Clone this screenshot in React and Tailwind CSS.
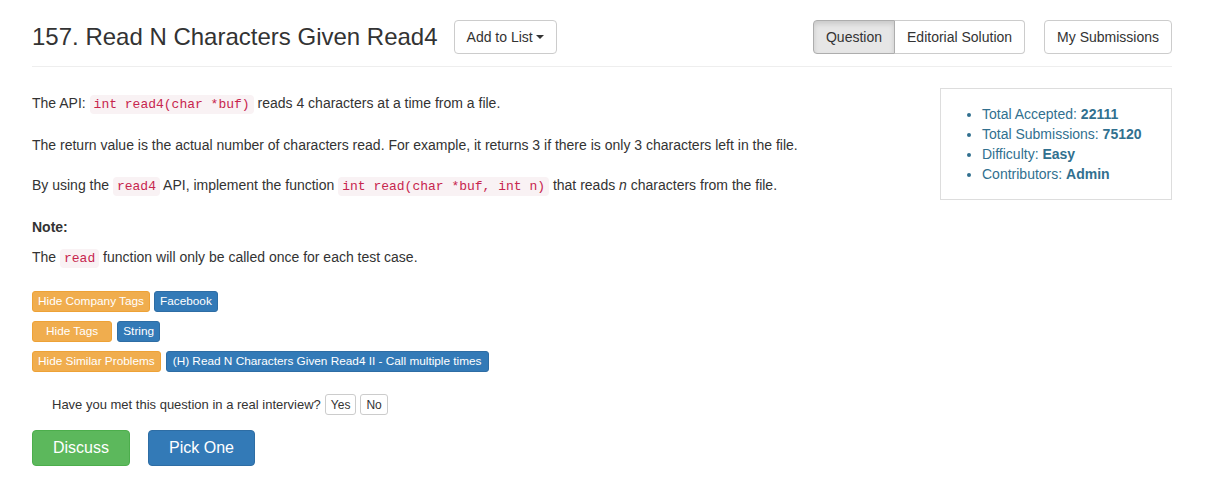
import React from "react";

const codeCls = "font-['Liberation_Mono',monospace] text-[13px] leading-[14px] text-[#c7254e] bg-[#f9f2f4] rounded px-1 py-[2px]";

function Code({ children }) {
  return <code className={codeCls}>{children}</code>;
}

function Xs({ children, color = "blue", className = "" }) {
  const c = color === "orange" ? "bg-[#f0ad4e] border-[#eea236]" : "bg-[#337ab7] border-[#2e6da4]";
  return (
    <span className={`inline-block text-white text-[11.8px] leading-[19px] border rounded-[3px] ${c} ${className}`}>{children}</span>
  );
}

export default function App() {
  return (
    <div className="min-h-screen bg-white text-[#333] text-[14px] leading-[20px] font-['Liberation_Sans',Arial,sans-serif]">
      <div className="ml-[32px] w-[1140px]">
        {/* header */}
        <div className="flex items-center justify-between pt-[20px] pb-[12px] border-b border-[#eee]">
          <div className="flex items-center">
            <h3 className="text-[24px] leading-[34px] font-normal">157. Read N Characters Given Read4</h3>
            <button className="ml-[16px] h-[34px] px-[12px] border border-[#ccc] rounded bg-white text-[14px] flex items-center">
              Add to List
              <span className="ml-[3px] inline-block w-0 h-0 border-x-[4px] border-x-transparent border-t-[4px] border-t-[#333]" />
            </button>
          </div>
          <div className="flex items-center">
            <div className="flex">
              <button className="h-[34px] px-[12px] border border-[#adadad] rounded-l bg-[#e6e6e6] shadow-[inset_0_3px_5px_rgba(0,0,0,0.125)]">Question</button>
              <button className="h-[34px] px-[12px] border border-l-0 border-[#ccc] rounded-r bg-white">Editorial Solution</button>
            </div>
            <button className="ml-[19px] h-[34px] px-[12px] border border-[#ccc] rounded bg-white">My Submissions</button>
          </div>
        </div>

        <div className="flex justify-between">
          <div className="pt-[26px]">
            <p className="mb-[22px]">The API: <Code>int read4(char *buf)</Code> reads 4 characters at a time from a file.</p>
            <p className="mb-[20px]">The return value is the actual number of characters read. For example, it returns 3 if there is only 3 characters left in the file.</p>
            <p className="mb-[22px]">By using the <Code>read4</Code> API, implement the function <Code>int read(char *buf, int n)</Code> that reads <i>n</i> characters from the file.</p>
            <p className="mb-[10px] font-bold">Note:</p>
            <p>The <Code>read</Code> function will only be called once for each test case.</p>

            <div className="mt-[24px] flex flex-col gap-[9px]">
              <div className="flex gap-[4px]">
                <Xs color="orange" className="px-[5px]">Hide Company Tags</Xs>
                <Xs className="px-[5px]">Facebook</Xs>
              </div>
              <div className="flex gap-[5px]">
                <Xs color="orange" className="px-[13px]">Hide Tags</Xs>
                <Xs className="px-[5px]">String</Xs>
              </div>
              <div className="flex gap-[5px]">
                <Xs color="orange" className="px-[5px]">Hide Similar Problems</Xs>
                <Xs className="px-[6px]">(H) Read N Characters Given Read4 II - Call multiple times</Xs>
              </div>
            </div>

            <div className="mt-[22px] pl-[20px] flex items-center text-[13px]">
              <span>Have you met this question in a real interview?</span>
              <button className="ml-[4px] h-[21px] px-[5px] border border-[#ccc] rounded-[3px] bg-white text-[12px] leading-[18px]">Yes</button>
              <button className="ml-[4px] h-[21px] px-[5px] border border-[#ccc] rounded-[3px] bg-white text-[12px] leading-[18px]">No</button>
            </div>

            <div className="mt-[15px] flex gap-[18px]">
              <button className="h-[36px] px-[20px] rounded bg-[#5cb85c] border border-[#4cae4c] text-white text-[16px]">Discuss</button>
              <button className="h-[36px] px-[20px] rounded bg-[#337ab7] border border-[#2e6da4] text-white text-[16px]">Pick One</button>
            </div>
          </div>

          <div className="mt-[21px] w-[232px] h-[112px] border border-[#ddd] pt-[15px] self-start">
            <ul className="list-disc pl-[41px] text-[#31708f]">
              <li>Total Accepted: <b>22111</b></li>
              <li>Total Submissions: <b>75120</b></li>
              <li>Difficulty: <b>Easy</b></li>
              <li>Contributors: <b>Admin</b></li>
            </ul>
          </div>
        </div>
      </div>
    </div>
  );
}
